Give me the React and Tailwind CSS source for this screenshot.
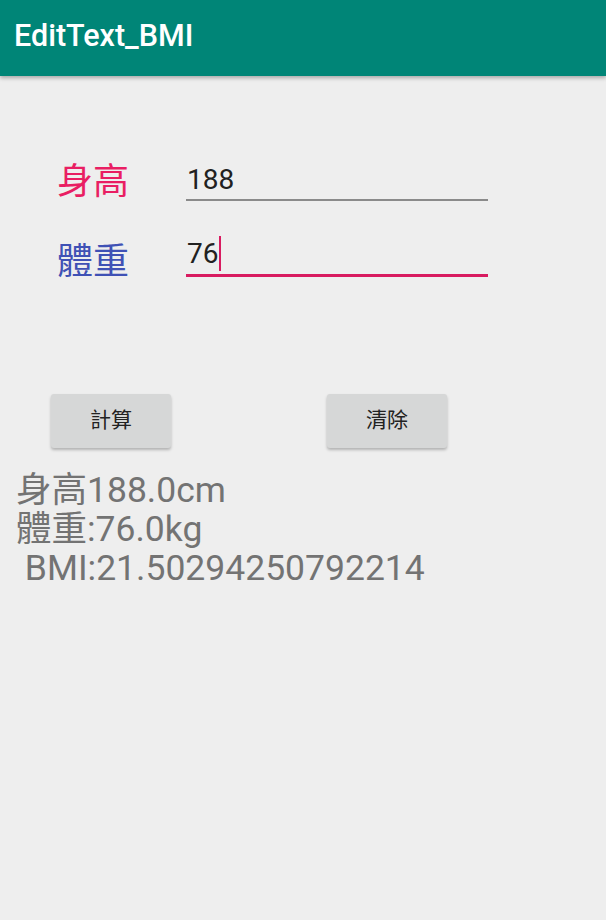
import React from "react";

const font = { fontFamily: "Roboto, 'Noto Sans CJK TC', sans-serif" };

const App = () => {
  return (
    <div
      className="w-[606px] h-[920px] bg-[#eeeeee] flex flex-col overflow-hidden"
      style={font}
    >
      {/* Toolbar */}
      <div className="h-[76px] bg-[#008577] flex items-center pl-[14px] pb-[4px] shadow-[0_2px_4px_rgba(0,0,0,0.3)] relative z-10">
        <span className="text-white text-[30.5px] leading-[36px] font-medium">EditText_BMI</span>
      </div>

      {/* Form */}
      <div className="flex flex-col pt-[82px] pl-[57px]">
        <div className="flex items-start">
          <div className="w-[129px] pt-[6px] text-[36px] leading-[36px] text-[#e91e63]">身高</div>
          <div className="w-[302px] h-[43px] border-b-2 border-[#8a8a8a] flex items-end pb-[3px] pl-[1px]">
            <span className="text-[28px] leading-[32px] text-[#212121]">188</span>
          </div>
        </div>
        <div className="flex items-start mt-[31px]">
          <div className="w-[129px] pt-[12px] text-[36px] leading-[36px] text-[#3f51b5]">體重</div>
          <div className="w-[302px] h-[45px] border-b-[3px] border-[#d81b60] flex items-end pb-[4px] pl-[1px]">
            <span className="text-[28px] leading-[32px] text-[#212121]">76</span>
            <span className="w-[2px] h-[35px] bg-[#d81b60] ml-[1px] mb-[-1px]" />
          </div>
        </div>
      </div>

      {/* Buttons */}
      <div className="flex pt-[114px] pl-[51px] gap-[156px]">
        <button className="w-[120px] h-[54px] bg-[#d6d7d7] rounded-[3px] shadow-[0_2px_3px_rgba(0,0,0,0.25)] text-[21px] text-[#222222]">
          計算
        </button>
        <button className="w-[120px] h-[54px] bg-[#d6d7d7] rounded-[3px] shadow-[0_2px_3px_rgba(0,0,0,0.25)] text-[21px] text-[#222222]">
          清除
        </button>
      </div>

      {/* Result */}
      <div className="pt-[23px] pl-[16px] text-[35.5px] leading-[39px] text-[#737373] whitespace-pre">
        <div>身高188.0cm</div>
        <div>體重:76.0kg</div>
        <div> BMI:21.50294250792214</div>
      </div>
    </div>
  );
};

export default App;
